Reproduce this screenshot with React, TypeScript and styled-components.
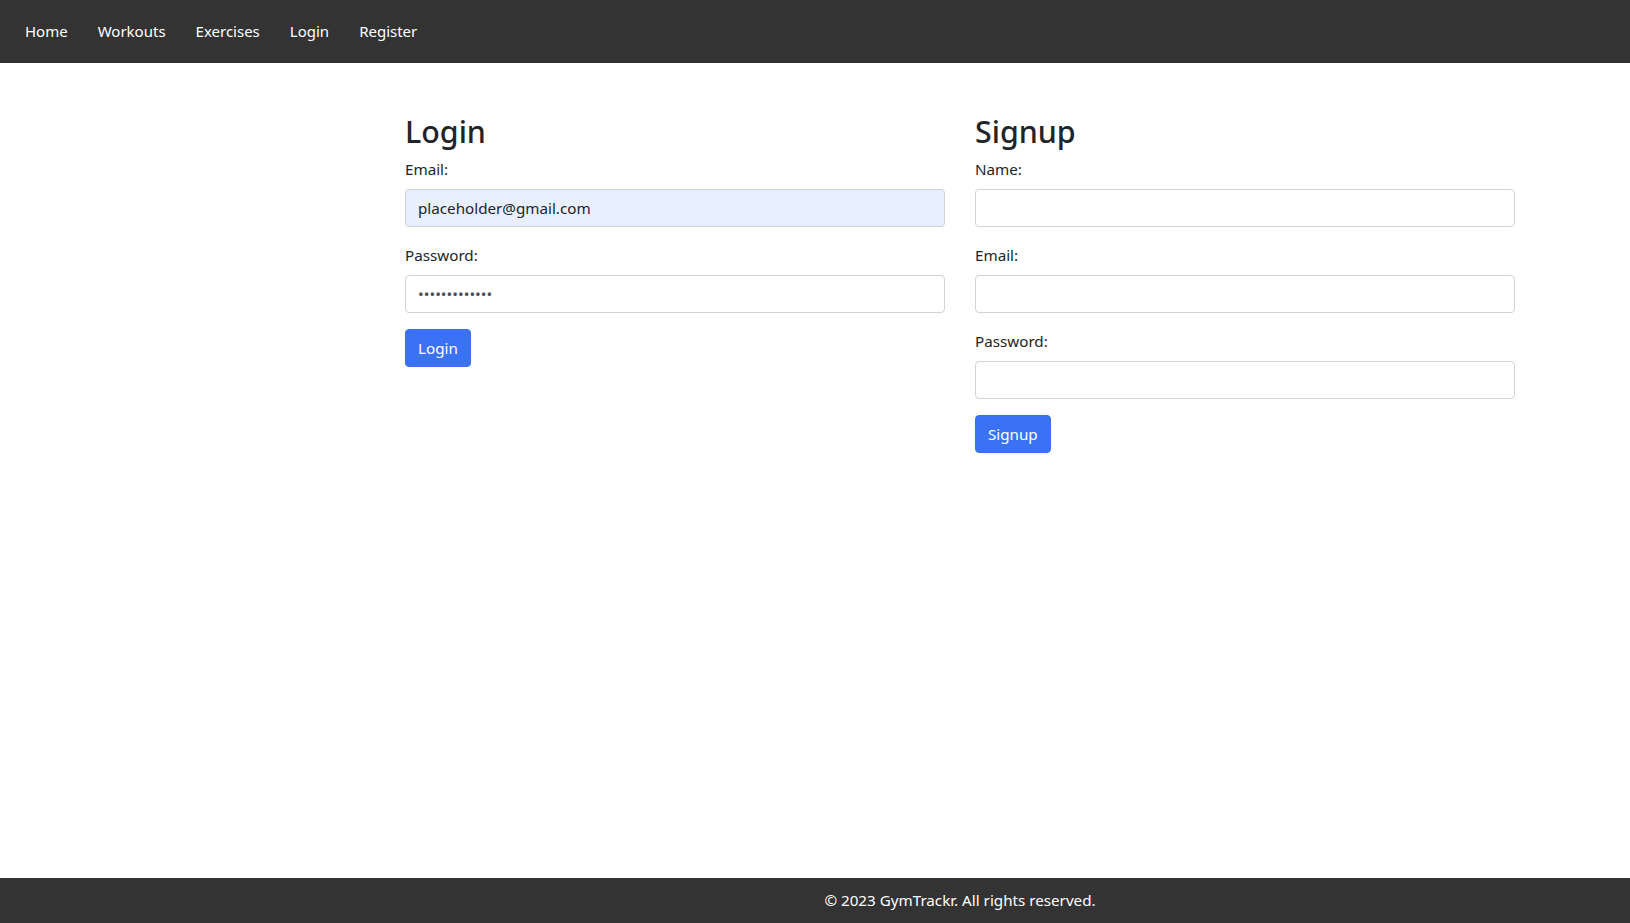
import React from 'react'
import styled, { createGlobalStyle } from 'styled-components'

//#region : styled-components
const GlobalStyle = createGlobalStyle`
* {
    box-sizing: border-box;
}
body {
    margin: 0;
    font-family: "Noto Sans", "Open Sans", "Liberation Sans", sans-serif;
    font-size: 15.2px;
    line-height: 24px;
    color: #212529;
    background: #fff;
}
`

const Page = styled.div`
min-height: 100vh;
display: flex;
flex-direction: column;
`

const NavBar = styled.nav`
height: 63px;
background-color: #333333;
display: flex;
align-items: center;
padding: 0 0 2px 10px;
`

const NavLink = styled.a`
color: #ffffff;
text-decoration: none;
padding: 0 15px;
font-size: 15px;
cursor: pointer;
`

const Main = styled.main`
flex: 1;
padding: 48px 0 0 290px;
`

const Container = styled.div`
width: 1140px;
margin: 0 auto;
padding: 0 15px;
display: grid;
grid-template-columns: 1fr 1fr;
column-gap: 30px;
align-items: start;
`

const Column = styled.section`
display: flex;
flex-direction: column;
`

const Title = styled.h2`
font-size: 30.4px;
font-weight: 500;
line-height: 38.4px;
margin: 0 0 6px;
padding-top: 2px;
`

const Group = styled.div`
display: flex;
flex-direction: column;
margin-bottom: 16px;
`

const Label = styled.label`
margin-bottom: 8px;
color: #212529;
`

const Input = styled.input<{ $filled?: boolean }>`
height: 38px;
width: 100%;
padding: 6px 12px;
font-family: inherit;
font-size: 15.2px;
line-height: 24px;
color: ${({ $filled }) => ($filled ? '#212529' : '#495057')};
background-color: ${({ $filled }) => ($filled ? '#e8f0fe' : '#ffffff')};
border: 1px solid #ced4da;
border-radius: 4px;
&:focus {
    outline: none;
}
`

const Button = styled.button`
align-self: flex-start;
height: 38px;
padding: 6px 12px;
font-family: inherit;
font-size: 15.2px;
line-height: 24px;
color: #ffffff;
background-color: #3b71f5;
border: 1px solid #3b71f5;
border-radius: 4px;
cursor: pointer;
`

const Footer = styled.footer`
height: 45px;
background-color: #333333;
color: #ffffff;
display: flex;
align-items: center;
justify-content: center;
padding: 0 0 2px 290px;
`
//#endregion

const links = ['Home', 'Workouts', 'Exercises', 'Login', 'Register']

const App = () => {
    return (
        <Page>
            <GlobalStyle />
            <NavBar>
                {links.map(l => <NavLink key={l}>{l}</NavLink>)}
            </NavBar>
            <Main>
                <Container>
                    <Column>
                        <Title>Login</Title>
                        <Group>
                            <Label>Email:</Label>
                            <Input $filled type="email" defaultValue="placeholder@gmail.com" />
                        </Group>
                        <Group>
                            <Label>Password:</Label>
                            <Input type="password" defaultValue="password12345" />
                        </Group>
                        <Button>Login</Button>
                    </Column>
                    <Column>
                        <Title>Signup</Title>
                        <Group>
                            <Label>Name:</Label>
                            <Input type="text" />
                        </Group>
                        <Group>
                            <Label>Email:</Label>
                            <Input type="email" />
                        </Group>
                        <Group>
                            <Label>Password:</Label>
                            <Input type="password" />
                        </Group>
                        <Button>Signup</Button>
                    </Column>
                </Container>
            </Main>
            <Footer>© 2023 GymTrackr. All rights reserved.</Footer>
        </Page>
    )
}

export default App
